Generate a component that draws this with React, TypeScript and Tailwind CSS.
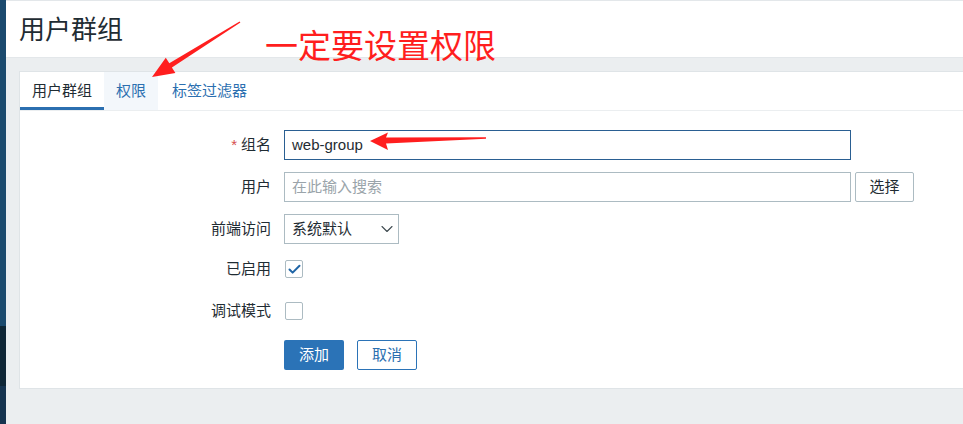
import { Check, ChevronDown } from "lucide-react";
import { ReactNode } from "react";

const font = "font-['Liberation_Sans','Noto_Sans_CJK_SC',sans-serif]";

function Row({
  label,
  required,
  top,
  children,
}: {
  label?: string;
  required?: boolean;
  top?: boolean;
  children: ReactNode;
}) {
  return (
    <div className={`grid h-[30px] grid-cols-[264px_1fr] ${top ? "items-start" : "items-center"}`}>
      <div className={`pr-[13px] text-right text-[#1f2c33] ${top ? "pt-[2px]" : ""}`}>
        {required && <span className="mr-[4px] text-[#d64e4e]">*</span>}
        {label}
      </div>
      <div className={`flex items-center ${top ? "pt-[4px]" : ""}`}>{children}</div>
    </div>
  );
}

function Checkbox({ checked }: { checked?: boolean }) {
  return (
    <div className="ml-[1px] flex size-[18px] items-center justify-center rounded-[2px] border border-[#acbbc2] bg-white">
      {checked && <Check className="size-[15px] text-[#1f65a6]" strokeWidth={3.2} />}
    </div>
  );
}

function Annotations() {
  return (
    <>
      <svg
        className="pointer-events-none absolute left-0 top-0"
        width={963}
        height={424}
        viewBox="0 0 963 424"
      >
        <polygon
          fill="#ff1e1e"
          points="152,77 165.8,57.8 169.3,63.3 239.6,21.4 240.4,22.6 171.9,67.5 175.4,73 152,77"
        />
        <polygon
          fill="#ff1e1e"
          points="370,141 388,132.5 386,137.5 486,137.3 486,138.7 386,143.5 388,150 370,141"
        />
      </svg>
      <div className="pointer-events-none absolute left-[265px] top-[30px] text-[33px] leading-[33px] text-[#ff1e1e]">
        一定要设置权限
      </div>
    </>
  );
}

export default function App() {
  return (
    <div className={`${font} relative flex h-[424px] w-full overflow-hidden text-[15px]`}>
      <div className="flex w-[6px] shrink-0 flex-col">
        <div className="h-[326px] bg-[#1b4a6e]" />
        <div className="h-[60px] bg-[#0e2636]" />
        <div className="flex-1 bg-[#15334f]" />
      </div>

      <div className="flex flex-1 flex-col bg-[#ebeef0]">
        <header className="flex h-[58px] items-center border-b border-t border-[#e3e7ea] bg-white pl-[13px] pt-[3px]">
          <h1 className="text-[26px] font-normal text-[#1f2c33]">用户群组</h1>
        </header>

        <div className="pl-[13px] pt-[13px]">
          <div className="border border-r-0 border-[#dfe4e7] bg-white pb-[18px]">
            <div className="flex h-[39px] border-b border-[#ebeef0]">
              <div className="flex h-[38px] items-center border-b-[3px] border-[#2b6fb0] px-[12px] pt-[3px] text-[#1f2c33]">
                用户群组
              </div>
              <div className="flex h-[38px] items-center bg-[#f3f7fb] px-[12px] text-[#2b6fb0]">
                权限
              </div>
              <div className="flex h-[38px] items-center pl-[14px] pr-[12px] text-[#2b6fb0]">
                标签过滤器
              </div>
            </div>

            <div className="flex flex-col gap-[12px] pt-[19px]">
              <Row label="组名" required>
                <div className="flex h-[30px] w-[567px] items-center border border-[#2a5f92] px-[7px] text-[#1f2c33]">
                  web-group
                </div>
              </Row>
              <Row label="用户">
                <div className="flex h-[30px] w-[567px] items-center border border-[#acbbc2] px-[7px] text-[#9aa4aa]">
                  在此输入搜索
                </div>
                <button className="ml-[4px] flex h-[30px] w-[59px] items-center justify-center rounded-[2px] border border-[#acbbc2] bg-white text-[#1f2c33]">
                  选择
                </button>
              </Row>
              <Row label="前端访问">
                <div className="flex h-[30px] w-[115px] items-center justify-between border border-[#acbbc2] pl-[7px] pr-[1px] text-[#1f2c33]">
                  系统默认
                  <ChevronDown className="size-[20px] text-[#3f4a50]" strokeWidth={1.3} />
                </div>
              </Row>
              <Row label="已启用" top>
                <Checkbox checked />
              </Row>
              <Row label="调试模式" top>
                <Checkbox />
              </Row>
              <Row>
                <button className="flex h-[30px] w-[60px] items-center justify-center rounded-[2px] bg-[#2b73b7] text-white">
                  添加
                </button>
                <button className="ml-[13px] flex h-[30px] w-[60px] items-center justify-center rounded-[2px] border border-[#2b73b7] bg-white text-[#2b6fb0]">
                  取消
                </button>
              </Row>
            </div>
          </div>
        </div>
      </div>

      <Annotations />
    </div>
  );
}
